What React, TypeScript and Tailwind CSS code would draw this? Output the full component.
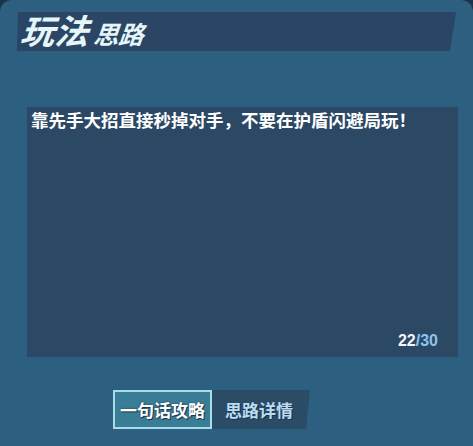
import React from "react";

const cjk = "font-['Noto_Sans_CJK_SC','Noto_Sans',sans-serif]";

export default function App() {
  return (
    <div className="w-[473px] h-[446px] bg-[#1c3348] overflow-hidden">
      <div className={`w-full h-full bg-[#2c5f80] rounded-t-[12px] flex flex-col ${cjk}`}>
        {/* heading strip */}
        <div className="ml-[17px] mt-[12px] w-[439px] h-[39px] bg-[#2b4664] [clip-path:polygon(1px_0,100%_0,calc(100%-6px)_100%,0_100%)] flex items-end pl-[4px] pb-[2px]">
          <span className="italic font-bold text-[34px] leading-[38px] text-[#e4f6fa] [transform:skewX(-6deg)]">玩法</span>
          <span className="italic font-bold text-[25px] leading-[30px] text-[#e4f6fa] ml-[5px] mb-[1px] [transform:skewX(-6deg)]">思路</span>
        </div>

        {/* text area */}
        <div className="ml-[27px] mt-[56px] w-[431px] h-[250px] bg-[#2b4865] flex flex-col justify-between">
          <p className="pl-[4px] pt-[2px] text-[17.5px] leading-[22px] font-bold text-white whitespace-nowrap">
            靠先手大招直接秒掉对手，不要在护盾闪避局玩！
          </p>
          <div className="self-end pr-[20px] pb-[7px] text-[16px] leading-[18px] font-bold font-['Liberation_Sans',sans-serif]">
            <span className="text-[#f2f6f8]">22</span>
            <span className="text-[#8cc6ea]">/30</span>
          </div>
        </div>

        {/* tabs */}
        <div className="ml-[113px] mt-[33px] flex">
          <div className="w-[99px] h-[39px] bg-[#3a7d96] border-2 border-[#a9dcea] flex items-center justify-center text-[17px] font-bold text-white [text-shadow:1px_1px_0_#1d3a4c,0_0_2px_#1d3a4c]">
            一句话攻略
          </div>
          <div className="w-[98px] h-[39px] bg-[#2b4c66] [clip-path:polygon(0_0,100%_0,calc(100%-4px)_100%,0_100%)] flex items-center justify-center pr-[4px] text-[17px] font-bold text-[#b9dcf2] [text-shadow:1px_1px_0_#1d3448]">
            思路详情
          </div>
        </div>
      </div>
    </div>
  );
}
